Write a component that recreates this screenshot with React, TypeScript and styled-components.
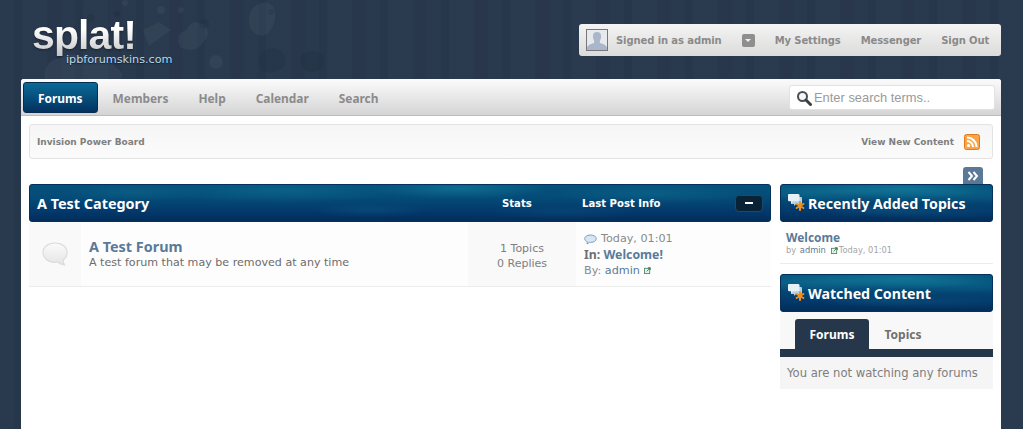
import React from "react";
import styled, { createGlobalStyle } from "styled-components";

const headingFont = `"Noto Sans", "DejaVu Sans", sans-serif`;

const GlobalStyle = createGlobalStyle`
  html, body { margin: 0; padding: 0; height: 100%; overflow: hidden; }
  body {
    font-family: "DejaVu Sans", Verdana, sans-serif;
    background-color: #28384c;
    background-image: repeating-linear-gradient(90deg,
      rgba(255,255,255,0.006) 0 14px, rgba(0,0,0,0.018) 14px 22px,
      rgba(255,255,255,0.012) 22px 47px, rgba(0,0,0,0.012) 47px 61px);
  }
  * { box-sizing: border-box; }
`;

const barTexture = `
  background-color: #03396b;
  background-image:
    radial-gradient(ellipse 70px 9px at 14% 20%, rgba(30,140,165,0.22), transparent),
    radial-gradient(ellipse 90px 10px at 58% 10%, rgba(30,150,175,0.4), transparent),
    radial-gradient(ellipse 120px 12px at 34% 16%, rgba(20,130,160,0.35), transparent),
    radial-gradient(ellipse 100px 10px at 84% 24%, rgba(20,130,160,0.3), transparent),
    radial-gradient(ellipse 60px 7px at 46% 70%, rgba(20,110,150,0.25), transparent),
    radial-gradient(ellipse 80px 7px at 72% 76%, rgba(20,110,150,0.2), transparent),
    linear-gradient(180deg, #04527c 0%, #044c77 35%, #03386a 75%, #022d5b 100%);
`;

const Wrapper = styled.div`
  width: 980px;
  margin: 0 auto;
  position: relative;
  left: -0.5px;
`;

const Header = styled.header`
  height: 79px;
  display: flex;
  justify-content: space-between;
  position: relative;
`;

const SplatArt = styled.svg`
  position: absolute;
  left: 0;
  top: 0;
`;

const Logo = styled.div`
  position: relative;
  margin: 14px 0 0 11px;
  width: 160px;
`;

const LogoMark = styled.div`
  font-family: "Liberation Sans", Arial, sans-serif;
  font-weight: 700;
  font-size: 41px;
  line-height: 42px;
  letter-spacing: -0.9px;
  background: linear-gradient(180deg, #ffffff 35%, #c4c4c4 100%);
  -webkit-background-clip: text;
  background-clip: text;
  color: transparent;
  filter: drop-shadow(0 1px 1px rgba(10, 20, 30, 0.6));
`;

const LogoSub = styled.div`
  font-size: 11.2px;
  line-height: 12px;
  color: #bcd9ea;
  margin: -2px 0 0 34px;
  white-space: nowrap;
  text-shadow: 0 1px 1px #10202f;
`;

const UserBar = styled.div`
  margin-top: 24px;
  width: 422px;
  height: 32px;
  display: flex;
  align-items: center;
  padding: 0 11px 0 7px;
  border-radius: 3px;
  background: linear-gradient(180deg, #f4f4f4 0%, #dbdbda 100%);
  font-size: 10px;
  letter-spacing: -0.1px;
  font-weight: 700;
  color: #8a8a8a;
  white-space: nowrap;
`;

const Avatar = styled.svg`
  display: block;
  flex-shrink: 0;
  margin-right: 8px;
`;

const DropButton = styled.span`
  flex-shrink: 0;
  width: 13px;
  height: 13px;
  margin: 0 20px;
  border-radius: 2px;
  background: #8e8e8e;
  display: flex;
  align-items: center;
  justify-content: center;
  &::after {
    content: "";
    border: 3px solid transparent;
    border-top: 3px solid #f0f0f0;
    border-bottom: 0;
  }
`;

const UserLink = styled.span<{ $gap?: number }>`
  margin-left: ${(p) => p.$gap ?? 0}px;
`;

const Main = styled.main`
  background: #fff;
  border-radius: 3px 3px 0 0;
  min-height: 350px;
`;

const Nav = styled.nav`
  height: 37px;
  display: flex;
  align-items: flex-start;
  padding: 3px 6px 0 2px;
  border-bottom: 1px solid #bdbdbd;
  border-radius: 3px 3px 0 0;
  background: linear-gradient(180deg, #fbfbfb 0%, #f0f0f0 30%, #d4d4d4 100%);
`;

const NavItem = styled.a<{ $active?: boolean }>`
  height: 31px;
  display: flex;
  align-items: center;
  font-family: ${headingFont};
  font-size: 11.9px;
  font-weight: 700;
  border-radius: 3px;
  padding: 0 15px;
  color: ${(p) => (p.$active ? "#fff" : "#8b8b8b")};
  ${(p) =>
    p.$active &&
    `background: linear-gradient(180deg, #0a6a97 0%, #03325f 100%);
     border: 1px solid #082c4e;
     padding: 0 14px;`}
`;

const SearchBox = styled.div`
  margin: 3px 0 0 auto;
  width: 206px;
  height: 25px;
  display: flex;
  align-items: center;
  gap: 2px;
  padding-left: 6px;
  background: #fff;
  border: 1px solid #e2e2e2;
  border-radius: 3px;
  font-family: "Liberation Sans", Arial, sans-serif;
  font-size: 12.9px;
  color: #9a9a9a;
`;

const Content = styled.div`
  padding: 8px 8px 0;
`;

const Crumbs = styled.div`
  height: 35px;
  display: flex;
  align-items: center;
  justify-content: space-between;
  padding: 1px 12px 0 7px;
  background: linear-gradient(180deg, #f6f6f6, #fbfbfb);
  border: 1px solid #e3e3e3;
  border-radius: 3px;
  font-size: 9px;
  font-weight: 700;
  color: #7f7f7f;
`;

const CrumbRight = styled.span`
  display: flex;
  align-items: center;
  gap: 10px;
`;

const Columns = styled.div`
  display: grid;
  grid-template-columns: 742px 213px;
  gap: 9px;
  margin-top: 8px;
`;

const ForumColumn = styled.div`
  padding-top: 17px;
`;

const CategoryBar = styled.div`
  ${barTexture}
  height: 38px;
  border-radius: 3px;
  border: 1px solid #04325a;
  display: grid;
  grid-template-columns: 465px 80px 153px 1fr;
  align-items: center;
  color: #fff;
  font-weight: 700;
  padding-left: 7px;
`;

const CategoryTitle = styled.span`
  font-family: ${headingFont};
  font-size: 14.4px;
`;

const ColHead = styled.span`
  font-size: 10.1px;
`;

const Collapse = styled.span`
  width: 28px;
  height: 17px;
  border-radius: 4px;
  background: #0a2236;
  border: 1px solid #1c4a68;
  display: flex;
  align-items: center;
  justify-content: center;
  &::after {
    content: "";
    width: 8px;
    height: 2px;
    background: #fff;
  }
`;

const ForumRow = styled.div`
  height: 65px;
  display: grid;
  grid-template-columns: 52px 387px 108px 1fr;
  border-bottom: 1px solid #ececec;
  background: #fdfdfd;
`;

const IconCell = styled.div`
  background: #f9f9f9;
  display: flex;
  align-items: center;
  justify-content: center;
`;

const TextCell = styled.div`
  padding: 15px 0 0 8px;
`;

const ForumTitle = styled.a`
  display: block;
  font-family: ${headingFont};
  font-size: 14.4px;
  line-height: 19px;
  font-weight: 700;
  color: #5a7a99;
`;

const ForumDesc = styled.div`
  font-size: 11.1px;
  line-height: 13px;
  color: #6c6c6c;
`;

const StatsCell = styled.div`
  background: #f9f9f9;
  display: flex;
  flex-direction: column;
  justify-content: center;
  align-items: center;
  padding-top: 4px;
  font-size: 11px;
  line-height: 15px;
  color: #7f7f7f;
`;

const LastPost = styled.div`
  padding: 9px 0 0 8px;
  font-size: 11.2px;
  line-height: 16px;
  color: #8a8a8a;
`;

const LastPostLine = styled.div`
  display: flex;
  align-items: center;
  gap: 4px;
  white-space: nowrap;
`;

const InLine = styled.div`
  font-family: ${headingFont};
  font-weight: 700;
  font-size: 12.3px;
  color: #6f6f6f;
`;

const Linked = styled.span`
  color: #5a7a99;
`;

const Sidebar = styled.aside`
  display: flex;
  flex-direction: column;
`;

const Toggle = styled.span`
  align-self: flex-end;
  margin-right: 10px;
  width: 20px;
  height: 17px;
  border-radius: 3px 3px 0 0;
  background: #5b7896;
  display: flex;
  align-items: center;
  justify-content: center;
`;

const SideBar = styled.div`
  ${barTexture}
  height: 38px;
  border-radius: 3px;
  border: 1px solid #04325a;
  display: flex;
  align-items: center;
  gap: 2px;
  padding-left: 7px;
  color: #fff;
  font-family: ${headingFont};
  font-size: 14.2px;
  font-weight: 700;
  white-space: nowrap;
`;

const RecentRow = styled.div`
  height: 42px;
  padding: 8px 0 0 6px;
  border-bottom: 1px solid #ececec;
  margin-bottom: 10px;
`;

const RecentTitle = styled.div`
  font-family: ${headingFont};
  font-size: 11.9px;
  line-height: 14px;
  font-weight: 700;
  color: #5a7a99;
`;

const RecentMeta = styled.div`
  display: flex;
  align-items: center;
  gap: 1px;
  font-size: 8.3px;
  line-height: 12px;
  color: #a5a5a5;
`;

const Tabs = styled.div`
  height: 45px;
  display: flex;
  align-items: flex-end;
  padding-left: 15px;
  background: #f8f8f9;
  border-bottom: 8px solid #27374b;
`;

const Tab = styled.span<{ $active?: boolean }>`
  height: 30px;
  width: ${(p) => (p.$active ? 74 : 68)}px;
  display: flex;
  align-items: center;
  justify-content: center;
  padding-top: 1px;
  border-radius: 3px 3px 0 0;
  font-family: ${headingFont};
  font-size: 12px;
  font-weight: 700;
  color: ${(p) => (p.$active ? "#fff" : "#707070")};
  background: ${(p) => (p.$active ? "#27374b" : "transparent")};
`;

const EmptyNote = styled.div`
  height: 32px;
  display: flex;
  align-items: center;
  padding-left: 7px;
  background: #f5f5f6;
  font-size: 11.6px;
  color: #7d7d7d;
  white-space: nowrap;
`;

const ExternalIcon = () => (
  <svg width="7" height="7" viewBox="0 0 8 8" style={{ marginLeft: 4 }}>
    <rect x="0.5" y="1.5" width="6" height="6" fill="#e8f2e8" stroke="#4c8a68" />
    <path d="M3 5 L7 1 M4.5 0.8 H7.2 V3.5" fill="none" stroke="#2f7a58" strokeWidth="1" />
  </svg>
);

const TopicIcon = () => (
  <svg width="18" height="20" viewBox="0 0 18 20">
    <path d="M3 4 H13 Q14 4 14 5 V10 Q14 11 13 11 H8 L6 13 V11 H3 Z" fill="#b9cfdf" />
    <path d="M0 2 Q0 1 1 1 H10 Q11.5 1 11.5 2 V7 Q11.5 8.2 10 8.2 H5 L3 10.4 V8.2 H1 Q0 8.2 0 7 Z" fill="#e6f0f7" />
    <g stroke="#f0901f" strokeWidth="2" strokeLinecap="round">
      <path d="M12 9 V17" />
      <path d="M8.6 11 L15.4 15" />
      <path d="M15.4 11 L8.6 15" />
    </g>
  </svg>
);

const App = () => {
  return (
    <>
      <GlobalStyle />
      <Wrapper>
        <Header>
          <SplatArt width="330" height="79" viewBox="0 0 330 79">
            <g fill="#9fb4c8" fillOpacity="0.065">
              <path d="M24 79 Q22 60 40 58 Q52 50 66 60 Q84 56 96 68 Q104 74 100 79 Z" />
              <path d="M160 48 Q152 34 166 30 Q170 18 182 24 Q192 32 182 42 Q176 54 160 48 Z" />
              <path d="M228 18 Q230 4 244 2 Q256 4 254 18 Q252 34 240 36 Q226 32 228 18 Z" />
              <path d="M138 22 L150 30 L128 46 L122 30 Z" />
              <circle cx="140" cy="10" r="4" />
              <circle cx="195" cy="62" r="7" />
              <circle cx="104" cy="3" r="3" />
              <circle cx="160" cy="10" r="3" />
            </g>
            <g fill="#0b1622" fillOpacity="0.1">
              <path d="M238 58 Q246 44 258 50 Q268 56 262 68 Q250 76 240 70 Z" />
              <path d="M280 56 Q292 46 302 56 Q306 70 292 72 Q278 72 280 56 Z" />
              <circle cx="183" cy="24" r="5" />
              <circle cx="70" cy="18" r="4" />
              <circle cx="96" cy="14" r="3" />
              <circle cx="250" cy="12" r="3" />
            </g>
          </SplatArt>
          <Logo>
            <LogoMark>splat!</LogoMark>
            <LogoSub>ipbforumskins.com</LogoSub>
          </Logo>
          <UserBar>
            <Avatar width="22" height="22" viewBox="0 0 22 22">
              <rect x="0.5" y="0.5" width="21" height="21" fill="#e6e9ee" stroke="#777" />
              <path d="M1 21 V18 Q3 15 8 14 Q8.5 12.5 8 11.5 Q6.5 9 7 6 Q7.5 3 11 3 Q14.5 3 15 6 Q15.5 9 14 11.5 Q13.5 12.5 14 14 Q19 15 21 18 V21 Z" fill="#aab6c9" />
            </Avatar>
            <UserLink>Signed in as admin</UserLink>
            <DropButton />
            <UserLink>My Settings</UserLink>
            <UserLink $gap={20}>Messenger</UserLink>
            <UserLink $gap={20}>Sign Out</UserLink>
          </UserBar>
        </Header>
        <Main>
          <Nav>
            <NavItem $active>Forums</NavItem>
            <NavItem>Members</NavItem>
            <NavItem>Help</NavItem>
            <NavItem>Calendar</NavItem>
            <NavItem>Search</NavItem>
            <SearchBox>
              <svg width="16" height="16" viewBox="0 0 16 16">
                <circle cx="6.5" cy="6.5" r="4.5" fill="#f4f6f8" stroke="#4a4f55" strokeWidth="2" />
                <path d="M10 10 L14.5 14.5" stroke="#3c4045" strokeWidth="3" strokeLinecap="round" />
              </svg>
              Enter search terms..
            </SearchBox>
          </Nav>
          <Content>
            <Crumbs>
              <span>Invision Power Board</span>
              <CrumbRight>
                View New Content
                <svg width="16" height="16" viewBox="0 0 16 16">
                  <rect x="0.5" y="0.5" width="15" height="15" rx="2" fill="#f9a64a" stroke="#e07a1c" />
                  <circle cx="4.5" cy="11.5" r="1.6" fill="#fff" />
                  <path d="M3 7 A6 6 0 0 1 9 13 M3 3.5 A9.5 9.5 0 0 1 12.5 13" fill="none" stroke="#fff" strokeWidth="2" />
                </svg>
              </CrumbRight>
            </Crumbs>
            <Columns>
              <ForumColumn>
                <CategoryBar>
                  <CategoryTitle>A Test Category</CategoryTitle>
                  <ColHead>Stats</ColHead>
                  <ColHead>Last Post Info</ColHead>
                  <Collapse />
                </CategoryBar>
                <ForumRow>
                  <IconCell>
                    <svg width="28" height="26" viewBox="0 0 28 26">
                      <defs>
                        <linearGradient id="bubble" x1="0" y1="0" x2="0" y2="1">
                          <stop offset="0" stopColor="#fbfbfb" />
                          <stop offset="1" stopColor="#e4e4e4" />
                        </linearGradient>
                      </defs>
                      <path d="M14 2 C21 2 26 6 26 11.5 C26 15 24.5 17.5 22 19 C22 21 22.5 22.5 23.5 24 C21 23.5 18.5 22.5 17 21 C16 21.2 15 21.3 14 21.3 C7 21.3 2 17 2 11.5 C2 6 7 2 14 2 Z" fill="url(#bubble)" stroke="#dcdcdc" strokeWidth="1.2" />
                    </svg>
                  </IconCell>
                  <TextCell>
                    <ForumTitle>A Test Forum</ForumTitle>
                    <ForumDesc>A test forum that may be removed at any time</ForumDesc>
                  </TextCell>
                  <StatsCell>
                    <span>1 Topics</span>
                    <span>0 Replies</span>
                  </StatsCell>
                  <LastPost>
                    <LastPostLine>
                      <svg width="13" height="11" viewBox="0 0 13 11">
                        <path d="M6.5 1 C10 1 12.3 2.6 12.3 4.7 C12.3 6.8 10 8.4 6.5 8.4 L5.5 8.4 L3 10 L3.4 7.8 C1.8 7.2 0.7 6.1 0.7 4.7 C0.7 2.6 3 1 6.5 1 Z" fill="#d6e6f2" stroke="#7fa0bc" />
                      </svg>
                      Today, 01:01
                    </LastPostLine>
                    <InLine>
                      In: <Linked>Welcome!</Linked>
                    </InLine>
                    <div>
                      By: <Linked>admin</Linked>
                      <ExternalIcon />
                    </div>
                  </LastPost>
                </ForumRow>
              </ForumColumn>
              <Sidebar>
                <Toggle>
                  <svg width="12" height="10" viewBox="0 0 12 10">
                    <path d="M1.5 1 L5 5 L1.5 9 M6.5 1 L10 5 L6.5 9" fill="none" stroke="#fff" strokeWidth="2" />
                  </svg>
                </Toggle>
                <SideBar>
                  <TopicIcon />
                  Recently Added Topics
                </SideBar>
                <RecentRow>
                  <RecentTitle>Welcome</RecentTitle>
                  <RecentMeta>
                    by&nbsp;<Linked>admin</Linked>
                    <ExternalIcon />
                    Today, 01:01
                  </RecentMeta>
                </RecentRow>
                <SideBar>
                  <TopicIcon />
                  Watched Content
                </SideBar>
                <Tabs>
                  <Tab $active>Forums</Tab>
                  <Tab>Topics</Tab>
                </Tabs>
                <EmptyNote>You are not watching any forums</EmptyNote>
              </Sidebar>
            </Columns>
          </Content>
        </Main>
      </Wrapper>
    </>
  );
};

export default App;
